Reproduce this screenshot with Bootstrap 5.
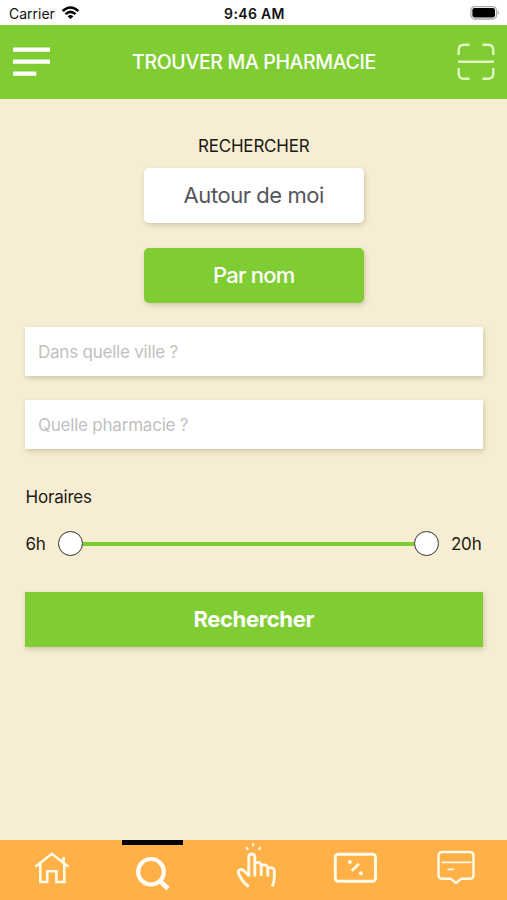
<!DOCTYPE html>
<html lang="fr">
<head>
<meta charset="utf-8">
<meta name="viewport" content="width=device-width, initial-scale=1">
<title>Trouver ma pharmacie</title>
<link href="https://cdn.jsdelivr.net/npm/bootstrap@5.3.0/dist/css/bootstrap.min.css" rel="stylesheet">
<style>
  :root { --leaf: #80cd33; --sand: #f7edd3; --mango: #ffb147; }
  body { font-family: Inter, "Liberation Sans", sans-serif; background: var(--sand); color: #1d1a14; }
  svg { display: block; }
  .status { height: 25px; font-size: 14px; padding: 1px 7px 0 9px; color: #111; }
  .status > * { flex: 1 1 0; }
  .status .carrier { gap: 6px; }
  .status .clock { font-weight: 600; letter-spacing: .35px; }
  .topbar { height: 73.5px; background: var(--leaf); padding: 0 12px 0 13px; }
  .topbar h1 { font-size: 19.5px; font-weight: 500; letter-spacing: -.35px; padding-top: 2px; }
  .screen { padding: 36px 24.5px 0 25px; }
  .caption-text { font-size: 17px; line-height: 22px; letter-spacing: -.2px; }
  .soft-shadow { box-shadow: 1px 2px 5px rgba(90, 80, 30, .26); }
  .choice { width: 220px; height: 55px; font-size: 22px; border: 0; border-radius: 5px; padding: 0; }
  .choice-off, .choice-off:hover { background: #fff; color: #55565a; margin-top: 11.5px; margin-bottom: 24.5px; letter-spacing: -.45px; }
  .choice-on, .choice-on:hover { background: var(--leaf); color: #fff; letter-spacing: -.8px; }
  .field { height: 49px; border: 0; border-radius: 0; padding: 2px 13px 0; font-size: 17px; letter-spacing: -.22px; }
  .field.form-control:not(:focus) { box-shadow: 1px 2px 5px rgba(90, 80, 30, .26); }
  .field::placeholder { color: #bfbfc1; opacity: 1; }
  .hours-title { margin-top: 37px; padding-left: .5px; }
  .hours { height: 50px; margin-top: 11px; padding: 0 1px 0 .5px; }
  .range { margin: 0 12px 0 12.5px; }
  .knob { width: 25px; height: 25px; background: #fff; border: 1.5px solid #33312d; }
  .track { height: 4px; background: var(--leaf); }
  .submit, .submit:hover { height: 55px; margin-top: 23.5px; background: var(--leaf); color: #fff; border: 0; border-radius: 0; font-size: 22px; font-weight: 700; letter-spacing: -.35px; padding: 0; }
  .tabs { height: 60px; background: var(--mango); }
  .tabs a { flex: 1 1 0; }
  .tabs .current::before { content: ""; position: absolute; top: 0; left: 50%; width: 61px; height: 4.5px; margin-left: -30.5px; background: #000; }
</style>
<script src="https://cdn.jsdelivr.net/npm/bootstrap@5.3.0/dist/js/bootstrap.bundle.min.js"></script>
</head>
<body>
<div class="d-flex flex-column vh-100 overflow-hidden">
  <div class="status d-flex align-items-center bg-white">
    <div class="carrier d-flex align-items-center"><span>Carrier</span>
      <svg width="19" height="14" viewBox="0 0 20 15" fill="none" stroke="#000" stroke-width="2.8"><path d="M1.6 5.4Q10-2.2 18.4 5.4M4.7 8.7Q10 4.1 15.3 8.7"/><path d="M10 14 6.9 11Q10 8.5 13.1 11Z" fill="#000" stroke="none"/></svg>
    </div>
    <div class="clock text-center">9:46 AM</div>
    <div class="d-flex justify-content-end">
      <svg width="31" height="16" viewBox="0 0 31 16"><rect x="1.9" y="1.6" width="25.6" height="12.4" rx="3.8" fill="#fff" stroke="#aaa" stroke-width="1.3"/><rect x="3.4" y="3.1" width="22.6" height="9.4" rx="2.2"/><path d="M28.7 5.6Q31 7.8 28.7 10Z" fill="#999"/></svg>
    </div>
  </div>

  <header class="topbar d-flex align-items-center justify-content-between text-white">
    <svg width="38" height="30" viewBox="0 0 38 30" fill="#fff"><rect y=".4" width="37" height="4.4" rx=".6"/><rect y="12.4" width="37" height="4.4" rx=".6"/><rect y="24.4" width="23.3" height="4.4" rx=".6"/></svg>
    <h1 class="mb-0">TROUVER MA PHARMACIE</h1>
    <svg width="38" height="38" viewBox="0 0 38 38" fill="none" stroke="#e1f7c8" stroke-width="2.4"><path d="M1.7 12V7Q1.7 1.7 7 1.7H12.5M25.5 1.7H31Q36.3 1.7 36.3 7V12M36.3 25V30.5Q36.3 35.8 31 35.8H25.5M12.5 35.8H7Q1.7 35.8 1.7 30.5V25M1 18.8H37"/></svg>
  </header>

  <main class="screen flex-grow-1 d-flex flex-column align-items-center">
    <div class="caption-text">RECHERCHER</div>
    <button type="button" class="btn choice choice-off soft-shadow">Autour de moi</button>
    <button type="button" class="btn choice choice-on soft-shadow fw-medium">Par nom</button>
    <input type="text" class="form-control field mt-4" placeholder="Dans quelle ville ?">
    <input type="text" class="form-control field mt-4" placeholder="Quelle pharmacie ?">
    <div class="caption-text align-self-start hours-title">Horaires</div>
    <div class="hours w-100 d-flex align-items-center">
      <span class="caption-text">6h</span>
      <div class="d-flex align-items-center flex-grow-1 range">
        <span class="knob rounded-circle"></span><span class="track flex-grow-1"></span><span class="knob rounded-circle"></span>
      </div>
      <span class="caption-text">20h</span>
    </div>
    <button type="button" class="btn submit soft-shadow w-100">Rechercher</button>
  </main>

  <nav class="tabs d-flex flex-shrink-0">
    <a href="#" class="d-flex justify-content-center" aria-label="Accueil">
      <svg width="60" height="60" fill="none" stroke="#fffbe8" stroke-width="2.6"><path d="M14.4 26.8 30.8 13.8 47.6 26.8M19.3 23.5V42H26.2V31.3H35.4V42H43.3V23.5M42.6 22.5V17"/></svg></a>
    <a href="#" class="current position-relative d-flex justify-content-center" aria-label="Recherche">
      <svg width="60" height="60" fill="none" stroke="#fffdf6" stroke-width="4.2"><circle cx="29" cy="31.8" r="12.8"/><path d="M37.8 40.6 46 48.8" stroke-width="4.8"/></svg></a>
    <a href="#" class="d-flex justify-content-center" aria-label="Actions">
      <svg width="60" height="60" fill="none" stroke="#fffbe8" stroke-width="2.9" stroke-linejoin="round"><path d="M24.8 46.5C21 44 18 40.5 15.5 35.5C12.5 30 16.5 28.3 19.5 30.5L24.8 35.5V17Q24.8 14 27.8 14T30.8 17V36.5M30.8 22.8Q37.2 21 37.2 26V36M37.2 25.3Q43.8 23.5 43.8 29V36.5M43.8 28Q50.3 26.5 50.3 31V37Q50.3 42 48.3 46.5"/><path d="M29.2 3V6.2M21.9 7.3 24.3 9.7M36.8 7.3 34.4 9.7" stroke-width="2"/></svg></a>
    <a href="#" class="d-flex justify-content-center" aria-label="Promotions">
      <svg width="60" height="60" fill="none" stroke="#fffbe8" stroke-width="3"><rect x="10.3" y="14.2" width="40.2" height="27" rx="3"/><path d="M34 23.8 26.8 30.8" stroke-width="2.6"/><g fill="#fffbe8" stroke="none"><circle cx="24.9" cy="22" r="2"/><circle cx="35.8" cy="33.3" r="2"/></g></svg></a>
    <a href="#" class="d-flex justify-content-center" aria-label="Messages">
      <svg width="60" height="60" fill="none" stroke="#fffbe8" stroke-width="2.4" stroke-linejoin="round"><path d="M16.3 12H43.7Q47.5 12 47.5 16V35Q47.5 38.8 43.7 38.8H35L30 43.2 25 38.8H16.3Q12.5 38.8 12.5 35V16Q12.5 12 16.3 12Z"/><path d="M15.5 22.4H45.5M21.5 29.4H28.2" stroke-width="1.8"/></svg></a>
  </nav>
</div>
</body>
</html>
